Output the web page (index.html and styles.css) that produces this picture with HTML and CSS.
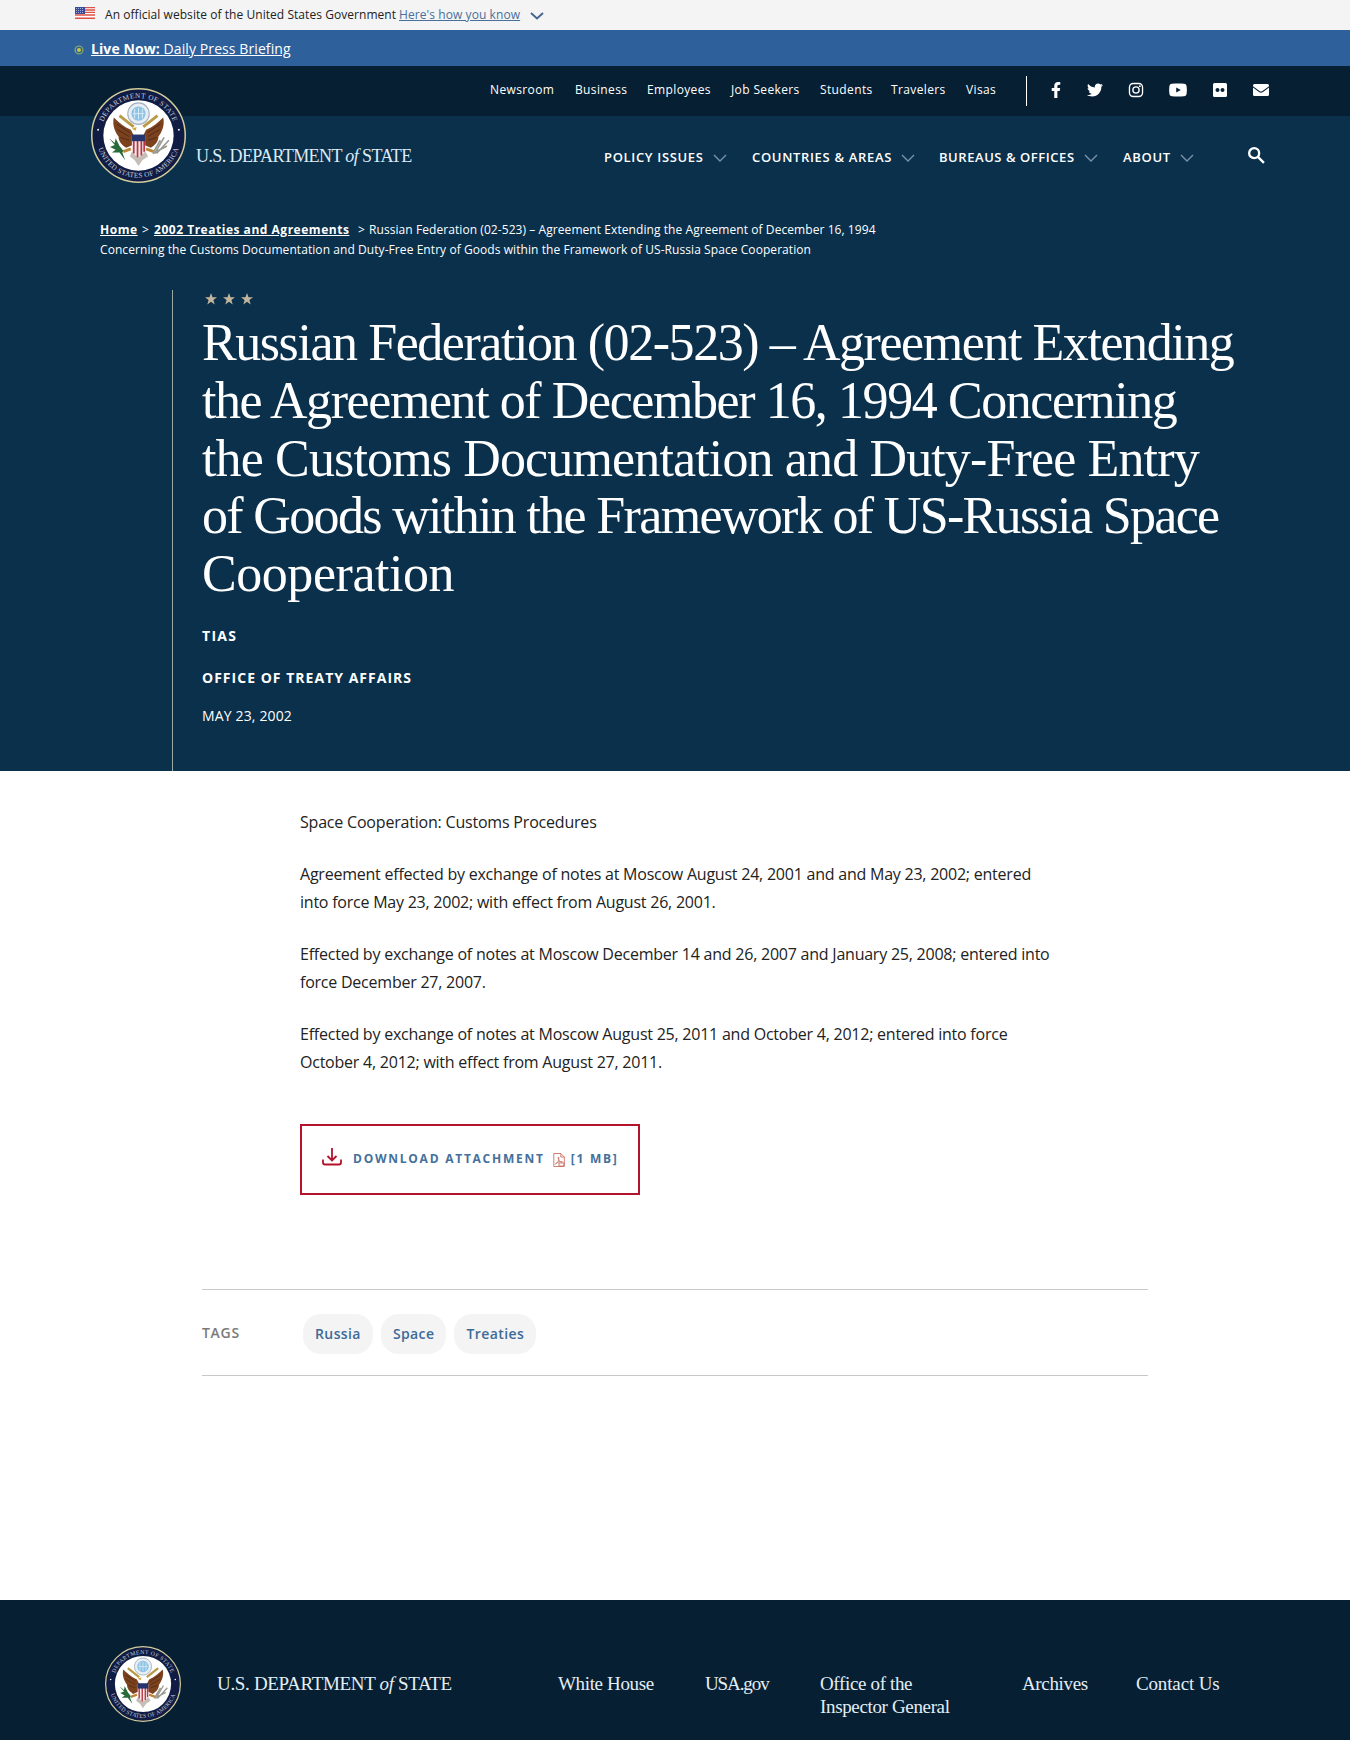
FILE: index.html
```html
<!DOCTYPE html>
<html lang="en">
<head>
<meta charset="utf-8">
<title>Russian Federation (02-523) - United States Department of State</title>
<link rel="stylesheet" href="styles.css">
</head>
<body>
<svg class="defs" width="0" height="0" aria-hidden="true">
  <defs>
    <path id="arc-top" d="M10.5 50A39.5 39.500 0 0 1 89.5 50"/>
    <path id="arc-bottom" d="M5.500 50A44.500 44.500 0 0 0 94.500 50"/>
    <symbol id="seal" viewBox="0 0 100 100">
      <circle cx="50" cy="50" r="49.2" fill="#101c43" stroke="#d3cd9b" stroke-width="1.6"/>
      <circle cx="50" cy="50" r="37" fill="#fff"/>
      <g class="seal-text">
        <text class="seal-top"><textPath href="#arc-top" startOffset="50%">DEPARTMENT OF STATE</textPath></text>
        <text class="seal-bottom"><textPath href="#arc-bottom" startOffset="50%">UNITED STATES OF AMERICA</textPath></text>
      </g>
      <circle cx="7.5" cy="44" r="1" fill="#fff"/><circle cx="92.5" cy="44" r="1" fill="#fff"/>
      <path d="M42 44C35 41 29 36 24 31c-2 9 2 16 5 20 0 6 4 9 8 12l7-3 12 0 7 3c4-3 8-6 8-12 3-4 7-11 5-20-5 5-11 10-18 13l-3 6H45z" fill="#7c421d"/>
      <path d="M27 38l14 9M28 44l12 7M31 52l9 3M73 38l-14 9M72 44l-12 7M69 52l-9 3" stroke="#4e2817" stroke-width="1"/>
      <path d="M30 29l15 12M70 29L55 41" stroke="#b99a46" stroke-width="3"/>
      <circle cx="50" cy="27" r="11.3" fill="#e8eef4" stroke="#a5b2be" stroke-width="1.2"/>
      <circle cx="50" cy="27" r="7.5" fill="#8fc4e4"/>
      <path d="M46 22v10M50 21v12M54 22v10M44 27h12" stroke="#d7edf8" stroke-width="1"/>
      <path d="M45 43c1-5 9-5 11 0l-2 5h-7z" fill="#fff"/>
      <path d="M43 43l5-2-1 4z" fill="#d6a52f"/>
      <path d="M34 67l8-3M66 67l-8-3" stroke="#bd8638" stroke-width="3"/>
      <path d="M41 72c2-6 5-9 9-9s8 4 10 9l-6 4-4 6-4-6z" fill="#c6bdb7"/>
      <path d="M43 50h14v15c0 4-4 6-7 8-3-2-7-4-7-8z" fill="#f4e7e7"/>
      <path d="M45 55v14M49 55v18M53 55v16M56 55v12" stroke="#b83646" stroke-width="1.8"/>
      <path d="M43 49h14v7H43z" fill="#25346c"/>
      <path d="M19 53l6 5 1-5 4 8 4 5-1 2 3 8-6-8-8 0 4-3-6-3 5-2z" fill="#286b38"/>
      <path d="M82 55l-13 14M80 61l-15 8M77 52l-10 17M73 55l-7 12" stroke="#999991" stroke-width="1.7"/>
    </symbol>
    <symbol id="chevron" viewBox="0 0 14 8"><path d="M1 1l6 6 6-6" fill="none" stroke="currentColor" stroke-width="1.4"/></symbol>
    <symbol id="star" viewBox="0 0 12 12"><path d="M6 0l1.5 4.2H12L8.4 6.9 9.7 11.4 6 8.7 2.3 11.4 3.6 6.9 0 4.2h4.5z" fill="#c2b59b"/></symbol>
  </defs>
</svg>

<div class="gov-banner">
  <svg class="flag" viewBox="0 0 20 12"><path fill="#fff" d="M0 0h20v12H0z"/><path d="M0 .6h20M0 3h20M0 5.4h20M0 8h20M0 11.2h20" stroke="#dc5145" stroke-width="1.4"/><path fill="#394b9b" d="M0 0h10v7H0z"/><path d="M1 1.5h8M1 3.5h8M1 5.5h8" stroke="#bac4e5" stroke-width=".8" stroke-dasharray="1 1"/></svg>
  <span class="gov-text">An official website of the United States Government</span>
  <a class="gov-link">Here's how you know</a>
  <svg class="gov-chevron" viewBox="0 0 14 8"><path d="M1 1l6 5.5L13 1" fill="none" stroke="#44618f" stroke-width="1.8"/></svg>
</div>
<div class="live-bar">
  <svg class="live-dot" viewBox="0 0 10 10"><circle cx="5" cy="5" r="3.9" fill="none" stroke="#80a56b" stroke-width="1.4"/><circle cx="5" cy="5" r="2" fill="#c9c73a"/></svg>
  <a class="live-link"><b>Live Now:</b> Daily Press Briefing</a>
</div>

<header class="header">
  <div class="utility">
    <nav class="utility-nav">
      <a>Newsroom</a><a>Business</a><a>Employees</a><a>Job Seekers</a><a>Students</a><a>Travelers</a><a>Visas</a>
    </nav>
    <div class="social">
      <svg viewBox="0 0 320 512"><path d="M279 288l14-93h-89v-60c0-25 12-50 52-50h41V7s-37-7-72-7c-73 0-121 44-121 125v70H23v93h81v224h100V288z"/></svg>
      <svg viewBox="0 0 512 512"><path d="M459 152c0 4 0 9 0 14 0 138-105 298-298 298-59 0-114-17-161-47 8 1 16 1 25 1 49 0 94-17 130-45-46-1-85-31-98-73 6 1 13 2 20 2 9 0 19-1 28-4-48-10-84-52-84-103v-1c14 8 30 13 47 13-28-19-47-51-47-87 0-19 5-37 14-53 52 64 129 105 216 110-2-8-3-16-3-24 0-58 47-105 105-105 30 0 57 13 77 33 24-5 46-13 66-25-8 24-24 45-46 58 21-2 42-8 60-16-14 21-32 39-51 54z"/></svg>
      <svg viewBox="0 0 24 24"><rect x="2.2" y="2.2" width="19.6" height="19.6" rx="5.5" class="outline"/><circle cx="12" cy="12" r="4.7" class="outline"/><circle cx="17.8" cy="6.2" r="1.4"/></svg>
      <svg viewBox="0 0 18 14"><path fill-rule="evenodd" d="M3 .7C7 .3 11 .3 15 .7c1.7.2 2.4 1 2.6 2.5.4 2.5.4 5 0 7.6-.2 1.500-1 2.300-2.600 2.500-4 .4-8 .4-12 0-1.700-.2-2.400-1-2.600-2.500C0 8.200 0 5.700.4 3.200.6 1.700 1.300.9 3 .7zM7.200 4.400v5.200L11.800 7z"/></svg>
      <svg viewBox="0 0 14 14"><path fill-rule="evenodd" d="M1.500 0h11Q14 0 14 1.500v11q0 1.500-1.500 1.500h-11Q0 14 0 12.500v-11Q0 0 1.500 0zm3 5a2 2 0 1 0 0 4 2 2 0 0 0 0-4zm5 0a2 2 0 1 0 0 4 2 2 0 0 0 0-4z"/></svg>
      <svg viewBox="0 0 16 12"><path d="M1.500 0h13Q16 0 16 1.500v.7L9.500 7Q8 8 6.500 7L0 2.200v-.7Q0 0 1.500 0zM0 3.600L6 8q2 1.300 4 0l6-4.400v6.900q0 1.500-1.500 1.500h-13Q0 12 0 10.500z"/></svg>
    </div>
  </div>
  <div class="masthead">
    <div class="brand">
      <svg class="brand-seal"><use href="#seal"/></svg>
      <span class="wordmark">U.S. DEPARTMENT <i>of</i> STATE</span>
    </div>
    <nav class="main-nav">
      <a><span>POLICY ISSUES</span><svg><use href="#chevron"/></svg></a>
      <a><span>COUNTRIES &amp; AREAS</span><svg><use href="#chevron"/></svg></a>
      <a class="bureaus"><span>BUREAUS &amp; OFFICES</span><svg><use href="#chevron"/></svg></a>
      <a><span>ABOUT</span><svg><use href="#chevron"/></svg></a>
      <svg class="search" viewBox="0 0 16 16"><circle cx="5.800" cy="5.800" r="4.700"/><path d="M9.300 9.300L15 15"/></svg>
    </nav>
  </div>
  <div class="breadcrumb">
    <div class="crumb-line"><b class="home">Home</b><span class="sep">&gt;</span><b class="parent">2002 Treaties and Agreements</b><span class="sep">&gt;</span><span>Russian Federation (02-523) – Agreement Extending the Agreement of December 16, 1994</span></div>
    <div>Concerning the Customs Documentation and Duty-Free Entry of Goods within the Framework of US-Russia Space Cooperation</div>
  </div>
  <div class="hero">
    <div class="stars"><svg><use href="#star"/></svg><svg><use href="#star"/></svg><svg><use href="#star"/></svg></div>
    <h1 class="title"><span class="t1">Russian Federation (02-523) – Agreement Extending</span> <span class="t2">the Agreement of December 16, 1994 Concerning</span> <span class="t3">the Customs Documentation and Duty-Free Entry</span> <span class="t4">of Goods within the Framework of US-Russia Space</span> <span class="t5">Cooperation</span></h1>
    <p class="kicker">TIAS</p>
    <p class="kicker office">OFFICE OF TREATY AFFAIRS</p>
    <p class="date">MAY 23, 2002</p>
  </div>
</header>

<main class="main">
  <article class="article">
    <p class="lead">Space Cooperation: Customs Procedures</p>
    <p>Agreement effected by exchange of notes at Moscow August 24, 2001 and and May 23, 2002; entered<br>into force May 23, 2002; with effect from August 26, 2001.</p>
    <p>Effected by exchange of notes at Moscow December 14 and 26, 2007 and January 25, 2008; entered into<br>force December 27, 2007.</p>
    <p>Effected by exchange of notes at Moscow August 25, 2011 and October 4, 2012; entered into force<br>October 4, 2012; with effect from August 27, 2011.</p>
    <a class="download">
      <svg class="dl-icon" viewBox="0 0 20 18"><path d="M10 0v12M5.500 8l4.500 4.500L14.500 8M1 11.500v3q0 2 2 2h14q2 0 2-2v-3"/></svg>
      <span>DOWNLOAD ATTACHMENT</span>
      <svg class="pdf-icon" viewBox="0 0 12 14"><path d="M.8.500h7L11.300 4v9.500H.8zM7.800.500V4h3.500M2.500 11c3-2 4-5 3-7-1 2 1 5 4 5-2-1-5 0-7 2M6 10h5v3H6z"/></svg>
      <span>[1 MB]</span>
    </a>
  </article>
  <section class="tags">
    <span class="tags-label">TAGS</span>
    <a class="tag">Russia</a><a class="tag">Space</a><a class="tag">Treaties</a>
  </section>
</main>

<footer class="footer">
  <svg class="footer-seal"><use href="#seal"/></svg>
  <span class="footer-wordmark">U.S. DEPARTMENT <i>of</i> STATE</span>
  <nav class="footer-nav">
    <a>White House</a><a class="usa">USA.gov</a><a>Office of the<br>Inspector General</a><a>Archives</a><a class="contact">Contact Us</a>
  </nav>
</footer>
</body>
</html>
```
FILE: styles.css
```css
* { box-sizing: border-box; }
body { margin: 0; width: 1350px; height: 1740px; overflow: hidden; background: #fff; color: #222; font-family: "Open Sans", sans-serif; display: flex; flex-direction: column; }
p, h1 { margin: 0; }
svg { display: block; flex: none; }
.defs { position: absolute; }
a, span { white-space: nowrap; }

.seal-text { fill: #c5cbdc; font-family: "Liberation Serif", serif; font-size: 7.6px; text-anchor: middle; }
.seal-top { letter-spacing: .5px; }
.seal-bottom { letter-spacing: .3px; }

.gov-banner { height: 30px; flex: none; background: #f4f4f4; padding-left: 75px; display: flex; font-size: 12px; line-height: 29px; }
.flag { width: 20px; height: 12px; margin: 7px 10px 0 0; }
.gov-text { width: 294px; letter-spacing: .05px; }
.gov-link { width: 121px; color: #49709b; text-decoration: underline; letter-spacing: .08px; }
.gov-chevron { width: 14px; height: 8px; margin: 12px 0 0 10px; }

.live-bar { height: 36px; flex: none; background: #2e609c; padding-left: 74px; display: flex; color: #fff; font-size: 14px; line-height: 37px; }
.live-dot { width: 10px; height: 10px; margin: 15px 7px 0 0; }
.live-link { text-decoration: underline; letter-spacing: .09px; }

.header { height: 705px; flex: none; background: #0a304c; color: #fff; display: flex; flex-direction: column; }
.utility { height: 50px; background: #071f33; display: flex; padding-left: 490px; }
.utility-nav { width: 536px; padding-top: 14px; display: grid; grid-template-columns: 85px 72px 84px 89px 71px 75px 60px; font-size: 12px; line-height: 20px; letter-spacing: .37px; }
.social { height: 30px; margin-top: 10px; padding: 0 0 2px 7px; border-left: 1px solid #fff; display: grid; grid-template-columns: 43px 36px 45px 40px 43px 40px; align-items: center; justify-items: center; }
.social svg { width: 16px; height: 16px; fill: #fff; }
.social svg:nth-child(4) { width: 18px; height: 14px; }
.social svg:nth-child(5) { width: 14px; height: 14px; }
.social svg:nth-child(6) { width: 16px; height: 12px; }
.outline { fill: none; stroke: #fff; stroke-width: 2; }

.masthead { height: 104px; display: flex; padding-left: 91px; }
.brand { width: 513px; display: flex; }
.brand-seal { width: 95px; height: 95px; margin-top: -28px; }
.wordmark { margin: 28px 0 0 10px; font: 18px/24px "Liberation Serif", serif; letter-spacing: -.6px; color: #dceaf4; }
.main-nav { display: grid; grid-template-columns: 148px 187px 184px 125px 20px; padding-top: 31px; font-size: 13px; font-weight: 600; line-height: 20px; letter-spacing: .67px; }
.bureaus { letter-spacing: .55px; }
.main-nav a { display: flex; height: 20px; }
.main-nav a svg { width: 14px; height: 8px; margin: 7px 0 0 9px; color: #7893a7; }
.search { width: 17px; height: 17px; fill: none; stroke: #fff; stroke-width: 2.2; }

.breadcrumb { height: 70px; padding-left: 100px; font-size: 12px; line-height: 20px; letter-spacing: .07px; white-space: nowrap; }
.crumb-line { display: flex; }
.crumb-line b { text-decoration: underline; letter-spacing: .52px; }
.home { width: 37px; }
.parent { width: 195px; }
.parent + .sep { margin-left: 9px; width: 11px; }
.home + .sep { margin-left: 5px; width: 12px; }

.hero { margin-left: 172px; border-left: 1px solid #9ba9a3; padding-left: 29px; flex: 1; }
.stars { display: flex; gap: 6px; padding: 3px 0 0 3px; height: 24px; }
.stars svg { width: 12px; height: 12px; }
.title { font: 400 52px/57.8px "Liberation Serif", serif; height: 289px; }
.title span { display: block; }
.t1 { letter-spacing: -1.44px; }
.t2 { letter-spacing: -1.42px; }
.t3 { letter-spacing: -.86px; }
.t4 { letter-spacing: -1.66px; }
.t5 { letter-spacing: -.45px; }
.kicker { margin-top: 23px; font-size: 14px; font-weight: 700; line-height: 20px; letter-spacing: 1.3px; }
.office { margin-top: 22px; letter-spacing: 1.02px; }
.date { margin-top: 18px; font-size: 14px; line-height: 20px; letter-spacing: .15px; }

.main { height: 829px; flex: none; padding: 37px 0 0 202px; }
.article { margin-left: 98px; font-size: 16px; line-height: 28px; letter-spacing: -.23px; white-space: nowrap; }
.article p { margin-bottom: 24px; }
.article .lead { letter-spacing: -.2px; }
.download { margin-top: 48px; width: 340px; height: 71px; border: 2px solid #b5122b; display: flex; align-items: center; padding: 0 0 2px 20px; color: #44709b; font-size: 12px; font-weight: 700; letter-spacing: 1.75px; }
.dl-icon { width: 20px; height: 18px; margin: -3px 11px 0 0; fill: none; stroke: #b5122b; stroke-width: 1.8; }
.pdf-icon { width: 12px; height: 14px; margin: 2px 6px 0 8px; fill: none; stroke: #c97064; stroke-width: .9; }
.tags { width: 946px; height: 87px; margin-top: 94px; border-top: 1px solid #c8c8c8; border-bottom: 1px solid #c8c8c8; display: flex; padding-top: 24px; font-size: 14px; font-weight: 600; line-height: 40px; }
.tags-label { width: 101px; color: #7a7a7a; line-height: 38px; letter-spacing: .7px; }
.tag { height: 40px; border-radius: 18px; background: #f4f4f4; padding: 0 12px; margin-right: 8px; color: #3d6b98; letter-spacing: .4px; }

.footer { height: 140px; flex: none; background: #071f33; padding: 45px 0 0 105px; display: flex; color: #e3eef5; font-family: "Liberation Serif", serif; }
.footer-seal { width: 76px; height: 76px; margin-top: 1px; }
.footer-wordmark { width: 341px; margin-left: 36px; font-size: 19px; line-height: 24px; padding-top: 27px; letter-spacing: -.33px; }
.footer-nav { display: grid; grid-template-columns: 147px 115px 202px 114px 100px; padding-top: 27px; font-size: 19px; line-height: 23px; letter-spacing: -.35px; }
.usa { letter-spacing: -1.1px; }
.contact { letter-spacing: -.15px; }
```
